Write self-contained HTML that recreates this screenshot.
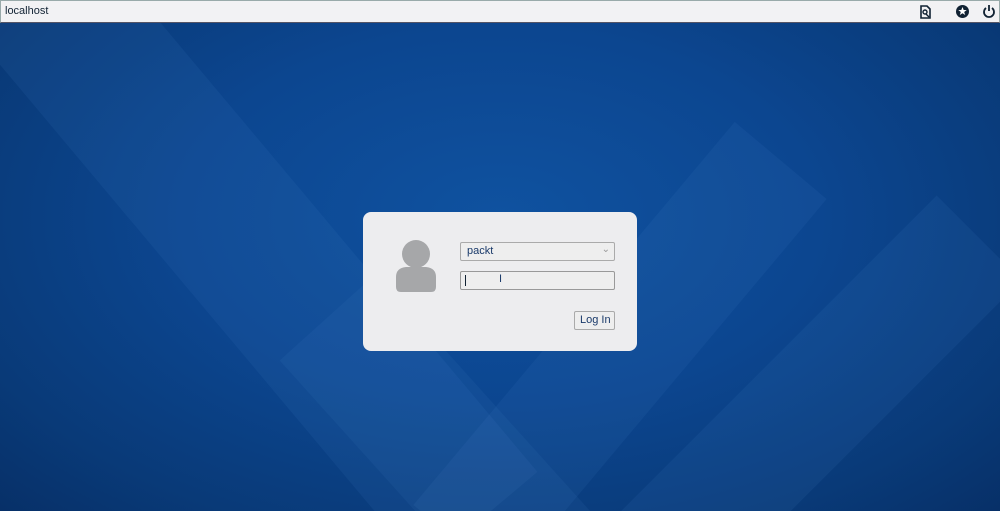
<!DOCTYPE html>
<html><head><style>
html,body{margin:0;width:1000px;height:511px;overflow:hidden}
body{font-family:"Liberation Sans",sans-serif;position:relative;background:#0b3f80}
.bg{position:absolute;left:0;top:22px;width:1000px;height:489px;overflow:hidden;
background:radial-gradient(ellipse at 50% 40%,#0f52a0 0%,#0c4690 45%,#093a78 80%,#073068 100%)}
.band{position:absolute;background:rgba(80,140,210,0.10)}
.top{position:absolute;left:0;top:0;width:998px;height:21px;background:#f2f2f4;border:1px solid #9aa;border-bottom:1px solid #556}
.top span{position:absolute;left:4px;top:4px;font-size:11px;color:#123}
.dlg{position:absolute;left:363px;top:212px;width:274px;height:139px;background:#ededef;border-radius:8px}
.f{position:absolute;border:1px solid #aaa;border-radius:2px;background:#eee;font-size:11px;color:#1a3a6a}
</style></head><body>
<div class="bg">
<div class="band" style="left:180px;top:-120px;width:150px;height:700px;transform:rotate(-40deg)"></div>
<div class="band" style="left:560px;top:80px;width:120px;height:500px;transform:rotate(40deg)"></div>
<div class="band" style="left:760px;top:150px;width:120px;height:450px;transform:rotate(45deg)"></div>
<div class="band" style="left:380px;top:250px;width:130px;height:350px;transform:rotate(-42deg);background:rgba(90,150,220,0.08)"></div>
</div>
<div class="top"><span>localhost</span>
<svg style="position:absolute;left:918px;top:4px" width="12" height="14"><path d="M2 1h6l3 3v9H2z" fill="none" stroke="#123" stroke-width="1.6"/><circle cx="6" cy="7" r="2" fill="none" stroke="#123" stroke-width="1.4"/><path d="M7 9l3 3" stroke="#123" stroke-width="1.4"/></svg>
<svg style="position:absolute;left:954px;top:3px" width="15" height="15"><circle cx="7.5" cy="7.5" r="6.5" fill="#123"/><path d="M7.5 3l1.2 3h3l-2.5 2 1 3-2.7-1.8L4.8 11l1-3-2.5-2h3z" fill="#fff"/></svg>
<svg style="position:absolute;left:981px;top:3px" width="14" height="15"><path d="M4 4a5 5 0 1 0 6 0" fill="none" stroke="#123" stroke-width="1.8"/><path d="M7 1v6" stroke="#123" stroke-width="1.8"/></svg>
</div>
<div class="dlg">
<svg style="position:absolute;left:30px;top:25px" width="48" height="58"><circle cx="23" cy="17" r="14" fill="#a6a7a9"/><path d="M3 40q0-9 10-10h20q10 1 10 10v10q0 5-5 5H8q-5 0-5-5z" fill="#a6a7a9"/></svg>
<div class="f" style="left:97px;top:30px;width:153px;height:17px"><span style="position:absolute;left:6px;top:2px">packt</span><span style="position:absolute;right:4px;top:1px;color:#999;font-size:10px">⌄</span></div>
<div class="f" style="left:97px;top:59px;width:153px;height:17px;border-color:#999"><span style="position:absolute;left:4px;top:3px;width:1px;height:11px;background:#123"></span><span style="position:absolute;left:38px;top:1px">I</span></div>
<div class="f" style="left:211px;top:99px;width:39px;height:17px"><span style="position:absolute;left:5px;top:2px">Log In</span></div>
</div>
</body></html>
